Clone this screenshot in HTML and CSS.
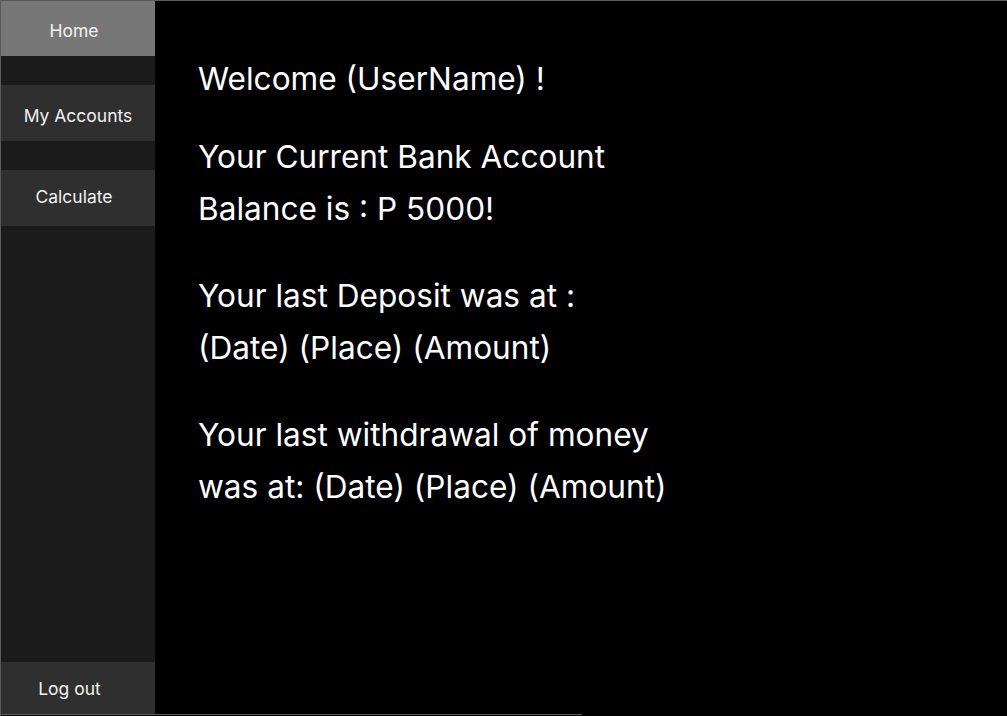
FILE: index.html
```html
<!DOCTYPE html>
<html lang="en">
<head>
<meta charset="utf-8">
<title>Home</title>
<link rel="stylesheet" href="styles.css">
</head>
<body>
<div class="frame">
  <div class="row">
    <nav class="sidebar">
      <a class="nav-item nav-home active">Home</a>
      <a class="nav-item nav-accounts">My Accounts</a>
      <a class="nav-item nav-calc">Calculate</a>
      <div class="spacer"></div>
      <a class="nav-item nav-logout">Log out</a>
    </nav>
    <main class="content">
      <p class="welcome">Welcome (UserName) !</p>
      <p class="block">Your Current Bank Account<br>Balance is : P 5000!</p>
      <p class="block">Your last Deposit was at :<br>(Date) (Place) (Amount)</p>
      <p class="block">Your last withdrawal of money<br>was at: (Date) (Place) (Amount)</p>
    </main>
  </div>
  <div class="bottom-line"></div>
</div>
</body>
</html>
```

FILE: styles.css
```css
html, body {
  margin: 0;
  padding: 0;
  background: #000;
}
body {
  font-family: Inter, "Noto Sans", sans-serif;
  color: #fff;
}
.frame {
  width: 1007px;
  height: 716px;
  box-sizing: border-box;
  border-top: 1px solid #5a5a5a;
  border-left: 1px solid #5a5a5a;
  display: flex;
  flex-direction: column;
}
.row {
  display: flex;
  height: 713px;
}
.bottom-line {
  width: 581px;
  height: 1px;
  background: #5a5a5a;
}
.sidebar {
  width: 154px;
  background: #1b1b1b;
  display: flex;
  flex-direction: column;
  gap: 29px;
}
.nav-item {
  height: 56px;
  box-sizing: border-box;
  display: flex;
  align-items: center;
  justify-content: center;
  background: #2f2f2f;
  color: #f2f2f2;
  font-size: 17.5px;
}
.nav-home { background: #777; height: 55px; padding: 3px 8px 0 0; }
.nav-accounts { padding-top: 4px; }
.nav-calc { padding-right: 8px; padding-bottom: 3px; }
.spacer { flex: 1; margin-top: -29px; }
.nav-logout { height: 52px; padding-right: 17px; }
.content {
  flex: 1;
  padding: 52px 0 0 43px;
  font-size: 31.6px;
  line-height: 52px;
}
.content p { margin: 0; }
.welcome { margin-bottom: 26px !important; }
.block { margin-bottom: 35px !important; }
```
